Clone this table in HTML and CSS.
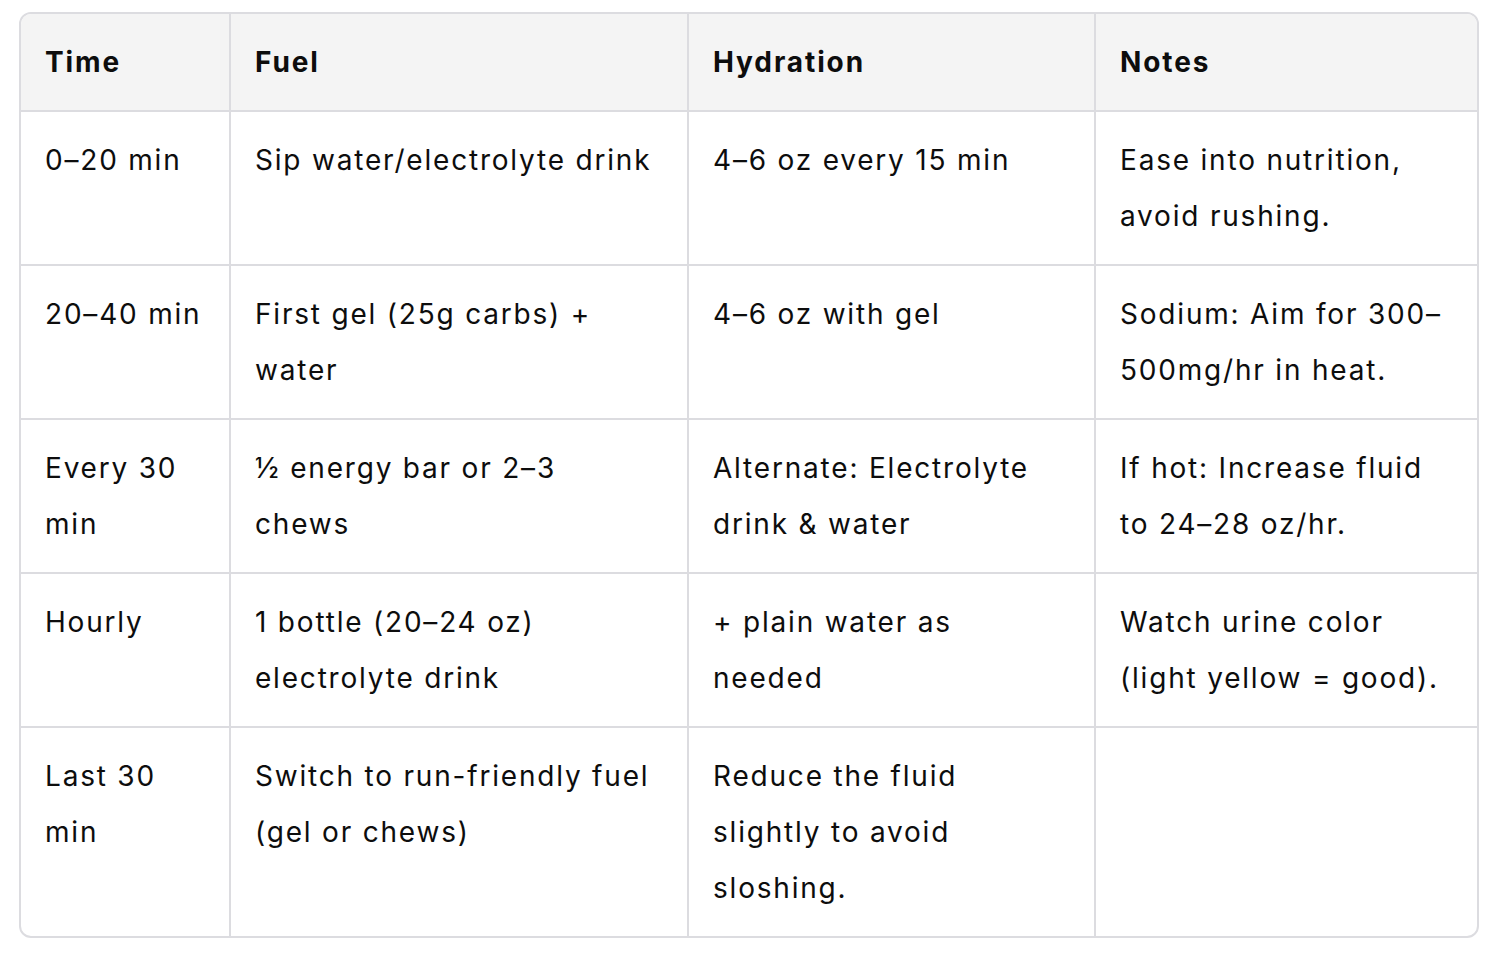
FILE: index.html
```html
<!DOCTYPE html>
<html>
<head>
<meta charset="utf-8">
<link rel="stylesheet" href="styles.css">
</head>
<body>
<div class="wrap">
<table class="plan">
<colgroup>
<col class="c1"><col class="c2"><col class="c3"><col class="c4">
</colgroup>
<thead>
<tr><th>Time</th><th>Fuel</th><th>Hydration</th><th>Notes</th></tr>
</thead>
<tbody>
<tr><td>0–20 min</td><td>Sip water/electrolyte drink</td><td>4–6 oz every 15 min</td><td>Ease into nutrition, avoid rushing.</td></tr>
<tr><td>20–40 min</td><td>First gel (25g carbs) + water</td><td>4–6 oz with gel</td><td>Sodium: Aim for 300–500mg/hr in heat.</td></tr>
<tr><td>Every 30 min</td><td>½ energy bar or 2–3 chews</td><td>Alternate: Electrolyte drink &amp; water</td><td>If hot: Increase fluid to 24–28 oz/hr.</td></tr>
<tr><td>Hourly</td><td>1 bottle (20–24 oz) electrolyte drink</td><td>+ plain water as needed</td><td>Watch urine color (light yellow = good).</td></tr>
<tr><td>Last 30 min</td><td>Switch to run-friendly fuel (gel or chews)</td><td>Reduce the fluid slightly to avoid sloshing.</td><td></td></tr>
</tbody>
</table>
</div>
</body>
</html>
```
FILE: styles.css
```css
html, body {
  margin: 0;
  background: #ffffff;
}
body {
  padding: 12px 17px 0 19px;
  font-family: Inter, "Noto Sans", sans-serif;
  color: #0d0d0d;
}
.wrap {
  width: 1456px;
  border: 2px solid #dcdce0;
  border-radius: 12px;
  overflow: hidden;
}
.plan {
  width: 1456px;
  table-layout: fixed;
  border-collapse: collapse;
  font-size: 28px;
  line-height: 56px;
  letter-spacing: 1.8px;
}
.c1 { width: 209px; }
.c2 { width: 458px; }
.c3 { width: 407px; }
.c4 { width: 382px; }
.plan th, .plan td {
  padding: 20px 24px 20px 24px;
  text-align: left;
  vertical-align: top;
  border-right: 2px solid #dcdce0;
  border-bottom: 2px solid #dcdce0;
}
.plan td:nth-child(2) { padding-right: 34px; }
.plan td:nth-child(1) { padding-right: 20px; }
.plan th:last-child, .plan td:last-child { border-right: none; }
.plan tbody tr:last-child td { border-bottom: none; }
.plan th {
  background: #f4f4f4;
  font-weight: 700;
  letter-spacing: 1.9px;
}
.plan td { font-weight: 400; }
```
